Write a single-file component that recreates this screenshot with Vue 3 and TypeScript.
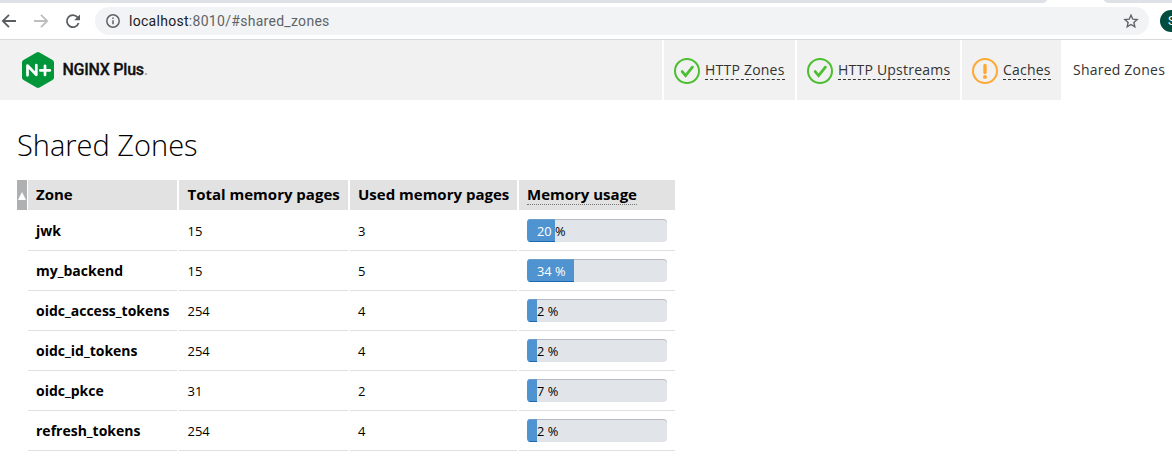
<script setup lang="ts">
interface Zone {
  name: string
  total: number
  used: number
  usage: number
  fill: number
}

interface Tab {
  label: string
  status?: 'ok' | 'warn'
  key: string
}

const tabs: Tab[] = [
  { label: 'HTTP Zones', status: 'ok', key: 'zones' },
  { label: 'HTTP Upstreams', status: 'ok', key: 'upstreams' },
  { label: 'Caches', status: 'warn', key: 'caches' },
  { label: 'Shared Zones', key: 'shared' },
]

const zones: Zone[] = [
  { name: 'jwk', total: 15, used: 3, usage: 20, fill: 28 },
  { name: 'my_backend', total: 15, used: 5, usage: 34, fill: 47 },
  { name: 'oidc_access_tokens', total: 254, used: 4, usage: 2, fill: 10 },
  { name: 'oidc_id_tokens', total: 254, used: 4, usage: 2, fill: 10 },
  { name: 'oidc_pkce', total: 31, used: 2, usage: 7, fill: 10 },
  { name: 'refresh_tokens', total: 254, used: 4, usage: 2, fill: 10 },
]
</script>

<template>
  <div class="page">
    <div class="strip">
      <div class="strip-left"></div>
      <div class="strip-right"></div>
    </div>
    <div class="toolbar">
      <svg class="controls" width="95" height="36" viewBox="0 0 95 36" fill="none" stroke-width="1.8">
        <path d="M16 18H3.2M9 11.8 2.8 18 9 24.2" stroke="#5a5d61" />
        <path d="M34 18H46.8M41 11.8 47.2 18 41 24.2" stroke="#bdbec0" />
        <path d="M77.6 14.4A6 6 0 1 0 78.6 20" stroke="#5a5d61" />
        <path d="M80 11.6V17.2H74.2Z" fill="#5a5d61" />
      </svg>
      <div class="address">
        <svg class="info" width="16" height="16" viewBox="0 0 16 16" fill="none">
          <circle cx="8" cy="8" r="6.2" stroke="#5f6368" stroke-width="1.5" />
          <path d="M8 7.2V11.2M8 4.6V6" stroke="#5f6368" stroke-width="1.5" />
        </svg>
        <span class="url"><b>localhost</b>:8010/#shared_zones</span>
        <svg class="star" width="16" height="16" viewBox="0 0 16 16" fill="none">
          <path d="M8 2.2 9.8 6.2 14.1 6.6 10.9 9.5 11.8 13.8 8 11.5 4.2 13.8 5.1 9.5 1.9 6.6 6.2 6.2Z" stroke="#5f6368" stroke-width="1.4" />
        </svg>
      </div>
      <div class="avatar">S</div>
    </div>

    <header class="header">
      <div class="brand">
        <svg width="32" height="36" viewBox="0 0 32 36">
          <path d="M14.5.5Q16-.4 17.5.5L30.5 8Q32 8.900 32 10.500V25.500Q32 27.100 30.500 28L17.500 35.500Q16 36.400 14.500 35.500L1.500 28Q0 27.100 0 25.500V10.500Q0 8.900 1.500 8Z" fill="#009639" />
          <path d="M5.500 23.300V13.500L14.300 22.700V13M18.300 18.400H27.800M23 13.800V23" fill="none" stroke="#fff" stroke-width="2.700" stroke-linecap="round" stroke-linejoin="round" />
        </svg>
        <span class="brand-name">NGINX Plus<i>.</i></span>
      </div>
      <nav class="tabs">
        <div v-for="tab in tabs" :key="tab.key" class="tab" :class="[tab.key, { active: !tab.status }]">
          <svg v-if="tab.status" width="26" height="26" viewBox="0 0 26 26" fill="none">
            <template v-if="tab.status === 'ok'">
              <circle cx="13" cy="13" r="12" stroke="#4bbf31" stroke-width="2" />
              <path d="M8.200 13.600 11.600 17.600 18.400 9.200" stroke="#4bbf31" stroke-width="2.800" stroke-linecap="round" />
            </template>
            <template v-else>
              <circle cx="13" cy="13" r="12" stroke="#ffa834" stroke-width="2" />
              <path d="M13 7.500V14.500" stroke="#ffa834" stroke-width="3.400" stroke-linecap="round" />
              <circle cx="13" cy="19" r="2" fill="#ffa834" />
            </template>
          </svg>
          <span class="tab-label">{{ tab.label }}</span>
        </div>
      </nav>
    </header>

    <main class="content">
      <h1>Shared Zones</h1>
      <div class="table">
        <div class="row head">
          <div class="sorter">
            <svg width="8" height="8" viewBox="0 0 8 8"><path d="M4 0 8 8H0Z" fill="#fff" /></svg>
          </div>
          <div class="cell">Zone</div>
          <div class="cell">Total memory pages</div>
          <div class="cell">Used memory pages</div>
          <div class="cell"><span class="hinted">Memory usage</span></div>
        </div>
        <div v-for="zone in zones" :key="zone.name" class="row">
          <div></div>
          <div class="cell name">{{ zone.name }}</div>
          <div class="cell total">{{ zone.total }}</div>
          <div class="cell">{{ zone.used }}</div>
          <div class="cell">
            <div class="bar">
              <span class="bar-text">{{ zone.usage }} %</span>
              <div class="bar-fill" :style="{ width: zone.fill + 'px' }">
                <span class="bar-text">{{ zone.usage }} %</span>
              </div>
            </div>
          </div>
        </div>
      </div>
    </main>
  </div>
</template>

<style>
body {
  margin: 0;
  background: #fff;
  overflow: hidden;
}
</style>

<style scoped>
.page {
  width: 1172px;
  height: 463px;
  overflow: hidden;
  background: #fff;
  color: #000;
  font-family: "Open Sans", "Noto Sans", sans-serif;
}
.strip {
  display: flex;
  justify-content: space-between;
  height: 3px;
}
.strip-left {
  width: 1047px;
  background: #dee1e6;
  border-bottom-right-radius: 5px 3px;
}
.strip-right {
  width: 68px;
  background: #dee1e6;
  border-bottom-left-radius: 5px 3px;
}
.toolbar {
  box-sizing: border-box;
  height: 37px;
  display: flex;
  align-items: center;
  border-bottom: 1px solid #d7d9dc;
}
.controls {
  flex: none;
}
.address {
  box-sizing: border-box;
  flex: none;
  width: 1054px;
  height: 28px;
  padding: 0 10px;
  border-radius: 14px;
  background: #f1f3f4;
  display: flex;
  align-items: center;
}
.url {
  flex: 1;
  margin-left: 8px;
  font: 14px/20px Roboto, sans-serif;
  letter-spacing: 0.29px;
  color: #5f6368;
}
.url b {
  font-weight: 400;
  color: #202124;
}
.avatar {
  flex: none;
  box-sizing: border-box;
  width: 22px;
  height: 22px;
  margin-left: 11px;
  padding-left: 8px;
  border-radius: 50%;
  background: #004d40;
  color: #fff;
  font: 12px/22px Roboto, sans-serif;
}
.header {
  display: flex;
  justify-content: space-between;
  height: 60px;
  background: #f1f1f1;
}
.brand {
  display: flex;
  align-items: center;
  padding-left: 22px;
}
.brand-name {
  margin-left: 8.5px;
  font: 500 16px/20px Roboto, sans-serif;
  letter-spacing: -0.25px;
  -webkit-text-stroke: 0.3px #111;
  color: #111;
}
.brand-name i {
  font-style: normal;
  color: #aaa;
  -webkit-text-stroke: 0;
}
.tabs {
  display: flex;
}
.tab {
  box-sizing: border-box;
  display: flex;
  align-items: center;
  border-left: 2px solid #fff;
  padding-left: 10px;
  font-size: 14px;
  line-height: 18px;
  letter-spacing: 0.22px;
  color: #333;
  white-space: nowrap;
}
.tab svg {
  flex: none;
  margin: 2px 5px 0 0;
}
.zones {
  width: 133px;
}
.upstreams {
  width: 165px;
}
.caches {
  width: 101px;
}
.shared {
  width: 111px;
}
.tab-label {
  border-bottom: 1px dashed #333;
}
.active {
  background: #fff;
}
.active .tab-label {
  border-bottom-color: transparent;
}
.content {
  padding-left: 17px;
}
h1 {
  margin: 0;
  padding-top: 25px;
  height: 55px;
  font-size: 29px;
  line-height: 40px;
  font-weight: 300;
}
.table {
  width: 658px;
}
.row {
  display: grid;
  grid-template-columns: 9px 149px 169px 167px 156px;
  grid-template-rows: 100%;
  column-gap: 2px;
  height: 40px;
}
.head {
  height: 30px;
  margin-bottom: 1px;
}
.sorter {
  width: 10px;
  background: #afb0b2;
  display: flex;
  align-items: center;
  justify-content: center;
  padding-top: 2px;
  box-sizing: border-box;
}
.cell {
  box-sizing: border-box;
  border-bottom: 1px solid #e0e0e0;
  padding-left: 8px;
  font-size: 13px;
  line-height: 40px;
  white-space: nowrap;
}
.total {
  padding-left: 8.5px;
}
.head .cell {
  border: 0;
  background: #e2e2e2;
  font-size: 15px;
  font-weight: 700;
  line-height: 29px;
}
.head .cell:nth-child(3) {
  padding-left: 8.5px;
}
.name {
  font-weight: 700;
  font-size: 14px;
}
.head .hinted {
  display: inline-block;
  height: 19px;
  line-height: 19px;
  border-bottom: 1px dotted #777;
}
.bar {
  position: relative;
  box-sizing: border-box;
  width: 140px;
  height: 23px;
  margin-top: 8px;
  border-radius: 4px;
  overflow: hidden;
  background: #e1e4e9;
  box-shadow: inset 0 1px 0 #b8babf;
}
.bar-text {
  display: block;
  padding-left: 10px;
  font-size: 12.8px;
  line-height: 25px;
  height: 23px;
}
.bar-fill {
  position: absolute;
  inset: 0 auto 0 0;
  overflow: hidden;
  background: #4f93d0;
  box-shadow: inset 0 1px 0 #6b9cc9, inset 0 -1px 0 #1869af;
  color: #fff;
}
</style>
